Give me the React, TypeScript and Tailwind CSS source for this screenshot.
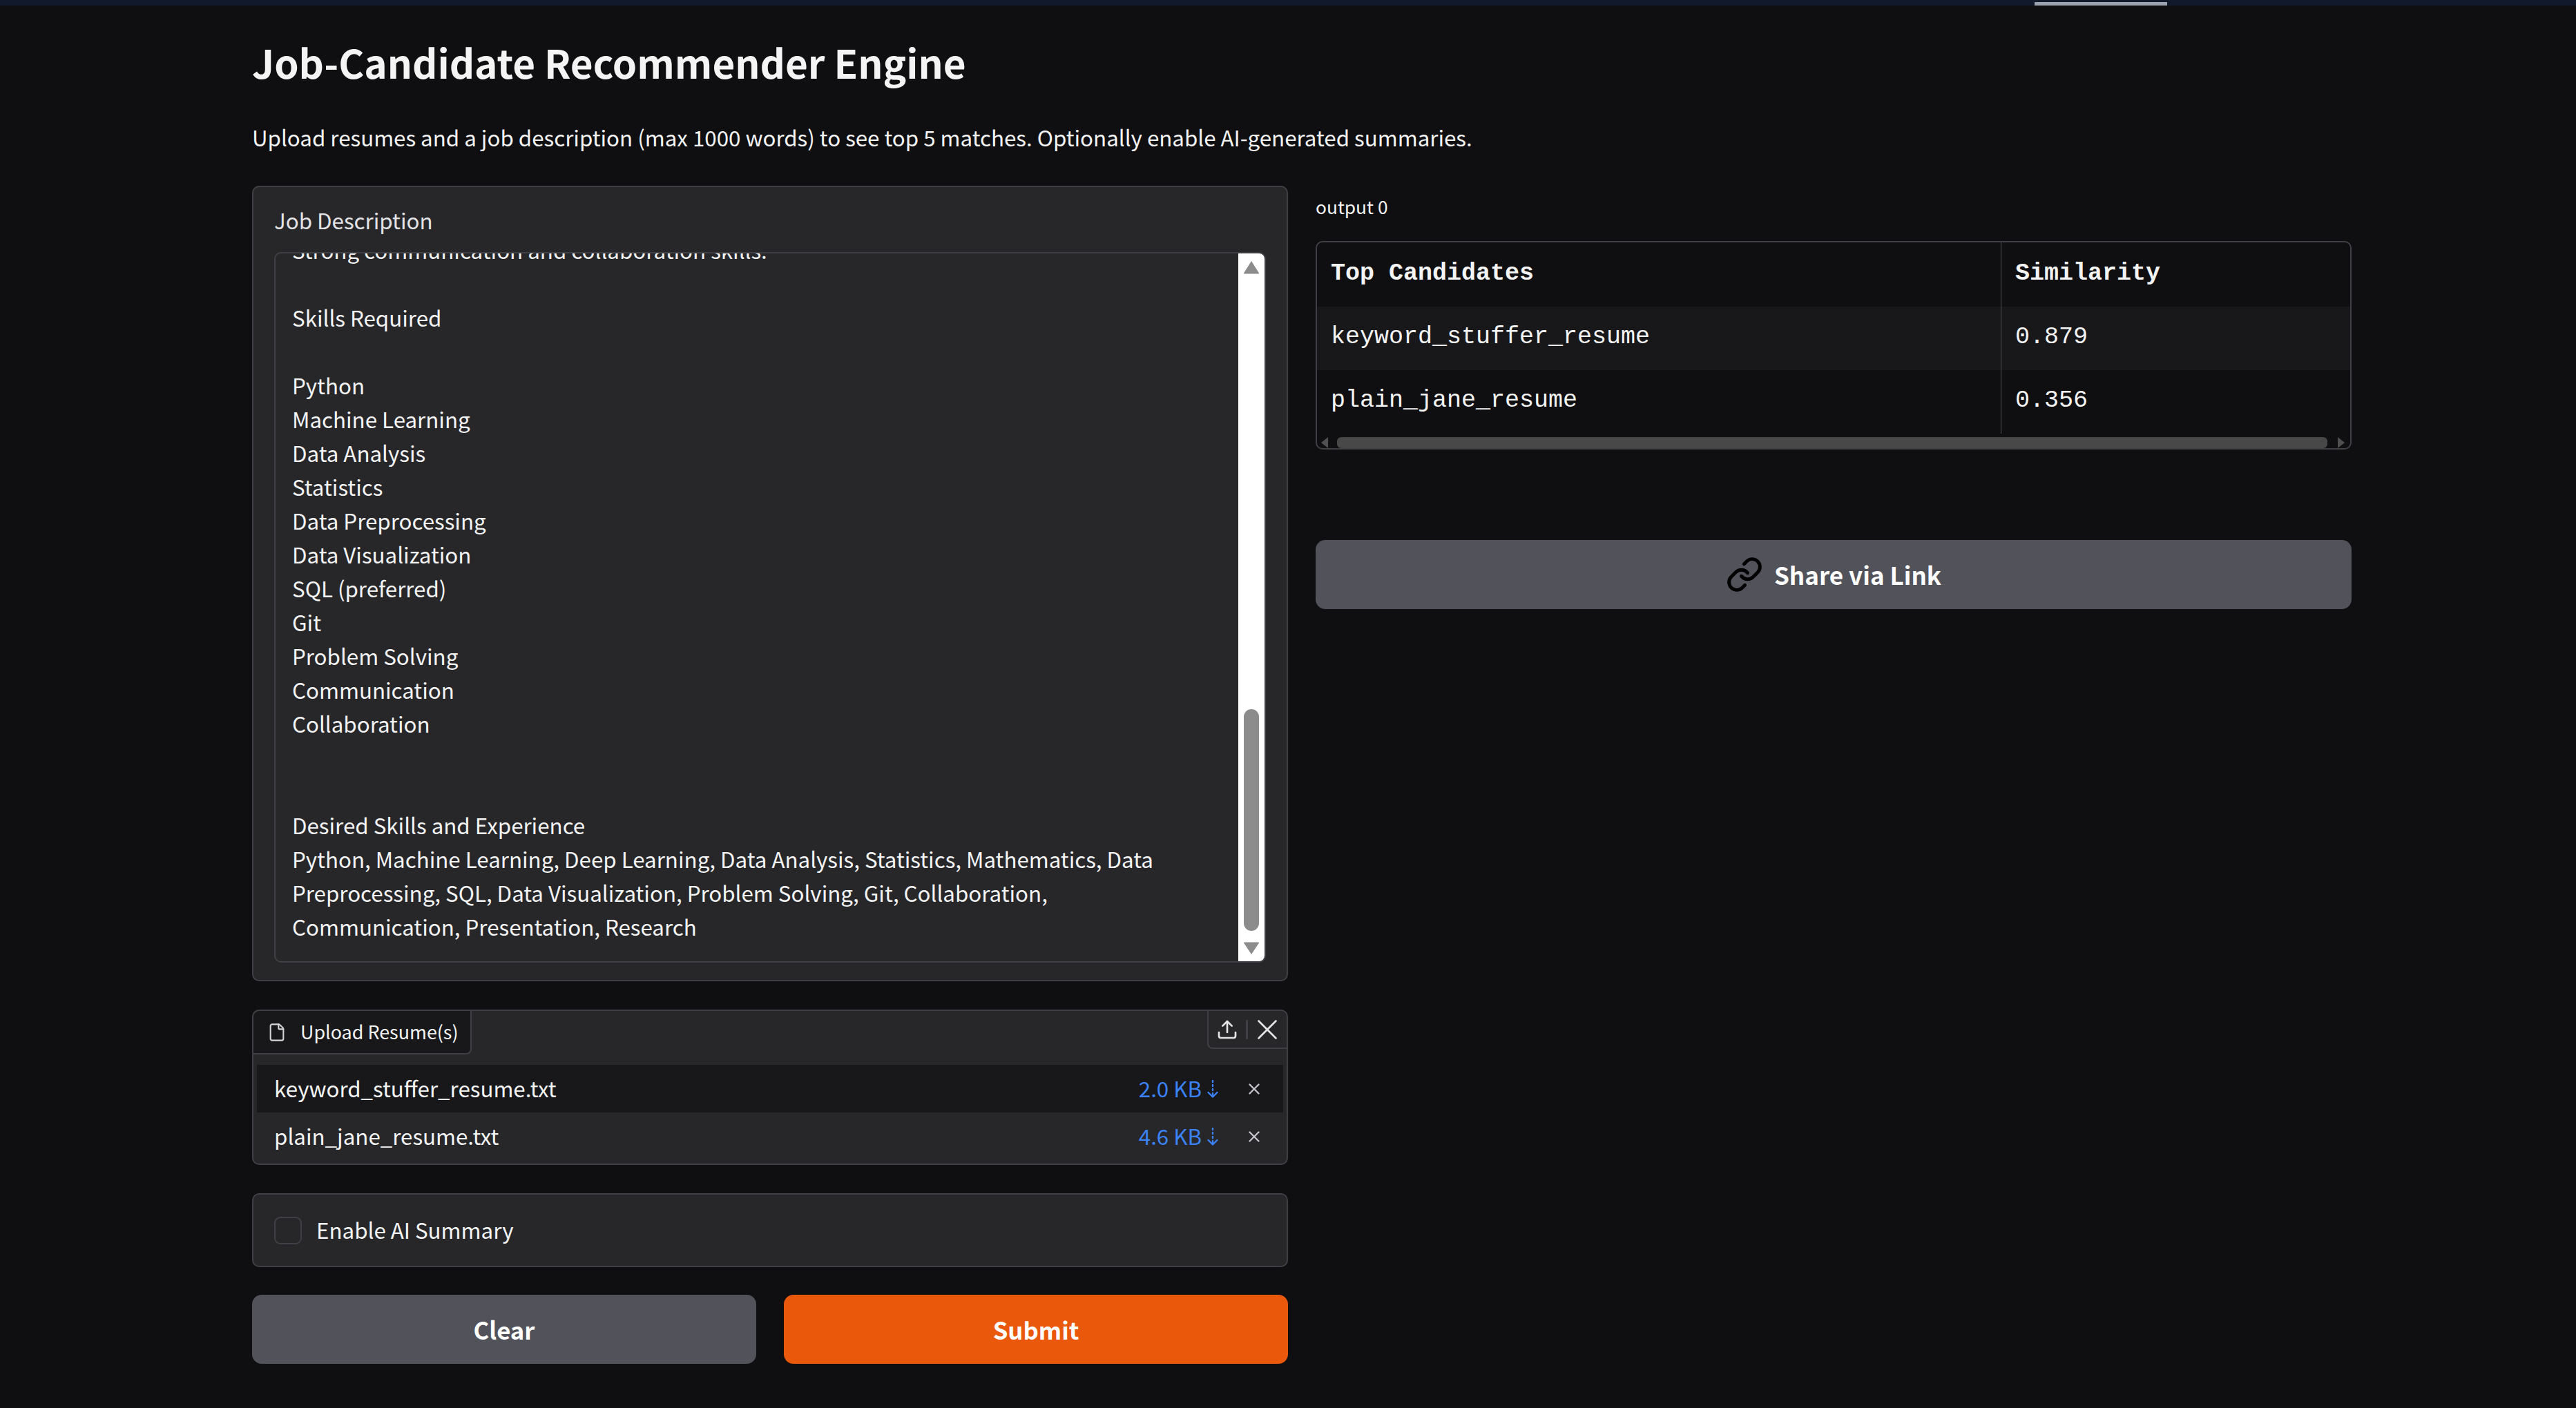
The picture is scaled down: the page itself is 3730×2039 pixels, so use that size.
import React from 'react';
import { File, Link, Upload, X } from 'lucide-react';

const sans = 'font-["Noto_Sans_CJK_SC","Source_Sans_Pro",sans-serif]';

const jobLines = [
  'Strong communication and collaboration skills.',
  '',
  'Skills Required',
  '',
  'Python',
  'Machine Learning',
  'Data Analysis',
  'Statistics',
  'Data Preprocessing',
  'Data Visualization',
  'SQL (preferred)',
  'Git',
  'Problem Solving',
  'Communication',
  'Collaboration',
  '',
  '',
  'Desired Skills and Experience',
  'Python, Machine Learning, Deep Learning, Data Analysis, Statistics, Mathematics, Data',
  'Preprocessing, SQL, Data Visualization, Problem Solving, Git, Collaboration,',
  'Communication, Presentation, Research',
];

const files = [
  { name: 'keyword_stuffer_resume.txt', size: '2.0 KB', bg: 'bg-[#18181b]' },
  { name: 'plain_jane_resume.txt', size: '4.6 KB', bg: '' },
];

const rows = [
  { name: 'keyword_stuffer_resume', score: '0.879', bg: 'bg-[#18181b]' },
  { name: 'plain_jane_resume', score: '0.356', bg: '' },
];

const DownloadArrow = () => (
  <svg width="16" height="26" viewBox="0 0 16 26" fill="none" stroke="#3b82f6" strokeWidth="2.4" strokeLinecap="round">
    <path d="M8 1v2M8 7v2M8 13v2M8 19v5" />
    <path d="M1.5 18L8 24.5L14.5 18" strokeLinejoin="round" />
  </svg>
);

const JobDescription = () => (
  <div className="h-[1152px] rounded-[10px] border-2 border-[#3f3f46] bg-[#27272a] px-[30px] flex flex-col">
    <div className="h-[94px] pt-[23px] text-[31.3px] leading-[50px] text-[#e4e4e7]">Job Description</div>
    <div className="h-[1029px] flex rounded-[10px] border-2 border-[#3f3f46] overflow-hidden">
      <div className="flex-1 overflow-hidden pl-[24px]">
        <div className="-mt-[30px] text-[31.3px] leading-[49px] text-[#f4f4f5]">
          {jobLines.map((line, i) => (
            <div key={i} className="h-[49px] whitespace-nowrap">{line}</div>
          ))}
        </div>
      </div>
      <div className="w-[38px] bg-white flex flex-col items-center">
        <svg className="mt-[10px]" width="24" height="20" viewBox="0 0 24 20" fill="#8c8c8c">
          <path d="M12 1L23 18.5Q23.5 19.5 22 19.5H2Q.5 19.500 1 18.500Z" />
        </svg>
        <div className="mt-[630px] w-[22px] h-[321px] rounded-full bg-[#8c8c8c]" />
        <svg className="mt-[16px]" width="24" height="19" viewBox="0 0 24 19" fill="#8c8c8c">
          <path d="M12 18L23 1.500Q23.500 .5 22 .5H2Q.5 .5 1 1.500Z" />
        </svg>
      </div>
    </div>
  </div>
);

const UploadPanel = () => (
  <div className="h-[225px] rounded-[10px] border-2 border-[#3f3f46] bg-[#27272a] flex flex-col">
    <div className="h-[63px] flex justify-between items-start">
      <div className="w-[316px] h-[63px] rounded-tl-[10px] rounded-br-[8px] border-r-2 border-b-2 border-[#3f3f46] bg-[#18181b] flex items-center pl-[20px] gap-[20px] text-[26.9px] text-[#f4f4f5] whitespace-nowrap">
        <File size={28} color="#d4d4d8" strokeWidth={1.8} />
        <span>Upload Resume(s)</span>
      </div>
      <div className="w-[115px] h-[55px] rounded-bl-[8px] rounded-tr-[10px] border-l-2 border-b-2 border-[#3f3f46] flex items-center pl-[11px]">
        <Upload size={32} color="#e4e4e7" strokeWidth={2} />
        <div className="ml-[11px] w-[3px] h-[28px] bg-[#3f3f46]" />
        <X size={50} color="#e4e4e7" strokeWidth={1.3} className="ml-[3px]" />
      </div>
    </div>
    <div className="mt-[15px] px-[5px]">
      {files.map(f => (
        <div key={f.name} className={`h-[69px] flex items-center pl-[25px] text-[31.3px] text-[#f4f4f5] ${f.bg}`}>
          <span className="flex-1">{f.name}</span>
          <span className="text-[#3b82f6]">{f.size}</span>
          <span className="ml-[8px]"><DownloadArrow /></span>
          <X size={26} color="#c4c4cc" strokeWidth={2.2} className="ml-[39px] mr-[29px]" />
        </div>
      ))}
    </div>
  </div>
);

const AiToggle = () => (
  <div className="h-[107px] rounded-[10px] border-2 border-[#3f3f46] bg-[#27272a] flex items-center pl-[30px]">
    <div className="w-[40px] h-[40px] rounded-[9px] border-2 border-[#3f3f46] bg-[#27272a]" />
    <span className="ml-[21px] text-[31.3px] text-[#f4f4f5]">Enable AI Summary</span>
  </div>
);

const CandidatesTable = () => (
  <div className={`h-[302px] rounded-[10px] border-2 border-[#3f3f46] bg-[#0f0f11] flex flex-col overflow-hidden font-['Liberation_Mono',monospace] text-[35px] text-[#f4f4f5]`}>
    <div className="h-[93px] flex items-center font-bold">
      <div className="w-[991px] h-full pl-[20px] pb-[3px] flex items-center border-r border-[#52525b]">Top Candidates</div>
      <div className="pl-[20px] pb-[3px]">Similarity</div>
    </div>
    {rows.map(r => (
      <div key={r.name} className={`h-[92px] flex items-center ${r.bg}`}>
        <div className="w-[991px] h-full pl-[20px] pb-[3px] flex items-center border-r border-[#52525b]">{r.name}</div>
        <div className="pl-[20px] pb-[3px]">{r.score}</div>
      </div>
    ))}
    <div className="mt-[5px] h-[16px] flex items-center pl-[5px] pr-[7px]">
      <svg width="12" height="16" viewBox="0 0 12 16" fill="#505050"><path d="M11 0V16L1 8Z" /></svg>
      <div className="ml-[12px] flex-1 h-[16px] rounded-[6px] bg-[#484848]" />
      <svg className="ml-[14px]" width="12" height="16" viewBox="0 0 12 16" fill="#505050"><path d="M1 0V16L11 8Z" /></svg>
    </div>
  </div>
);

export default function App() {
  return (
    <div className={`min-h-[2039px] bg-[#0f0f11] ${sans}`}>
      <div className="h-2 bg-[#111a2c] pl-[2946px] pt-[3px]">
        <div className="w-[192px] h-[5px] bg-[#9ca3af]" />
      </div>
      <div className="pl-[365px] w-[3405px] box-content">
        <h1 className="mt-[44px] h-[74px] text-[56.6px] leading-[74px] font-semibold text-[#f4f4f5]">Job-Candidate Recommender Engine</h1>
        <p className="mt-[48px] h-[50px] text-[31.3px] leading-[50px] text-[#f4f4f5]">
          Upload resumes and a job description (max 1000 words) to see top 5 matches. Optionally enable AI-generated summaries.
        </p>
        <div className="mt-[45px] flex gap-[40px]">
          <div className="w-[1500px] flex flex-col gap-[41px]">
            <JobDescription />
            <UploadPanel />
            <AiToggle />
            <div className="-mt-[1px] flex gap-[40px]">
              <button className="flex-1 h-[100px] rounded-[14px] bg-[#52525b] text-[34.7px] font-semibold text-white">Clear</button>
              <button className="flex-1 h-[100px] rounded-[14px] bg-[#ea580c] text-[34.7px] font-semibold text-white">Submit</button>
            </div>
          </div>
          <div className="w-[1500px]">
            <div className="pt-[14px] h-[80px] text-[26.3px] leading-[32px] text-[#f4f4f5]">output 0</div>
            <CandidatesTable />
            <button className="mt-[131px] w-full h-[100px] rounded-[14px] bg-[#52525b] flex items-center justify-center gap-[16px] text-[35px] font-semibold text-white">
              <Link size={54} color="#000000" strokeWidth={2.2} />
              <span>Share via Link</span>
            </button>
          </div>
        </div>
      </div>
    </div>
  );
}
